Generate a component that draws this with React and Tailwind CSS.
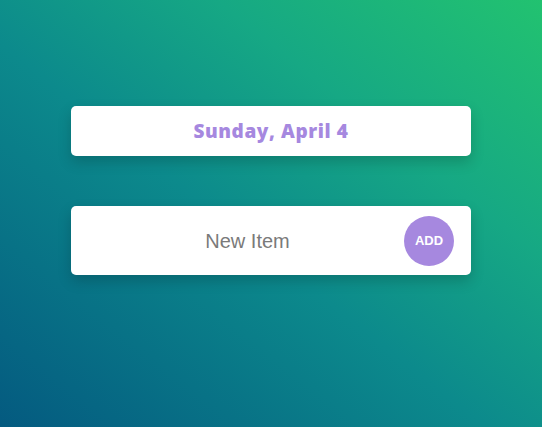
import React from 'react';

const App = () => {
  return (
    <div className="w-[542px] h-[427px] bg-[linear-gradient(to_top_right,#045a80,#0c8a8c_45%,#16a884_70%,#22c270)] flex flex-col items-center pt-[106px]">
      <div className="w-[400px] h-[50px] bg-white rounded-[5px] shadow-[0_6px_14px_rgba(0,0,0,0.18)] flex items-center justify-center">
        <h1 className="text-[19px] font-extrabold text-[#a688df] tracking-[0.6px]" style={{ fontFamily: '"Open Sans", sans-serif' }}>
          Sunday, April 4
        </h1>
      </div>
      <div className="mt-[50px] w-[400px] h-[69px] bg-white rounded-[5px] shadow-[0_6px_14px_rgba(0,0,0,0.18)] flex items-center pl-[20px] pr-[17px]">
        <input
          type="text"
          placeholder="New Item"
          className="flex-1 min-w-0 text-center text-[20px] text-gray-700 placeholder:text-[#7a7a7a] outline-none bg-transparent"
          style={{ fontFamily: '"Liberation Sans", Arial, sans-serif' }}
        />
        <button
          className="w-[50px] h-[50px] rounded-full bg-[#a688df] text-white text-[13px] font-bold flex items-center justify-center"
          style={{ fontFamily: '"Liberation Sans", Arial, sans-serif' }}
        >
          ADD
        </button>
      </div>
    </div>
  );
};

export default App;
